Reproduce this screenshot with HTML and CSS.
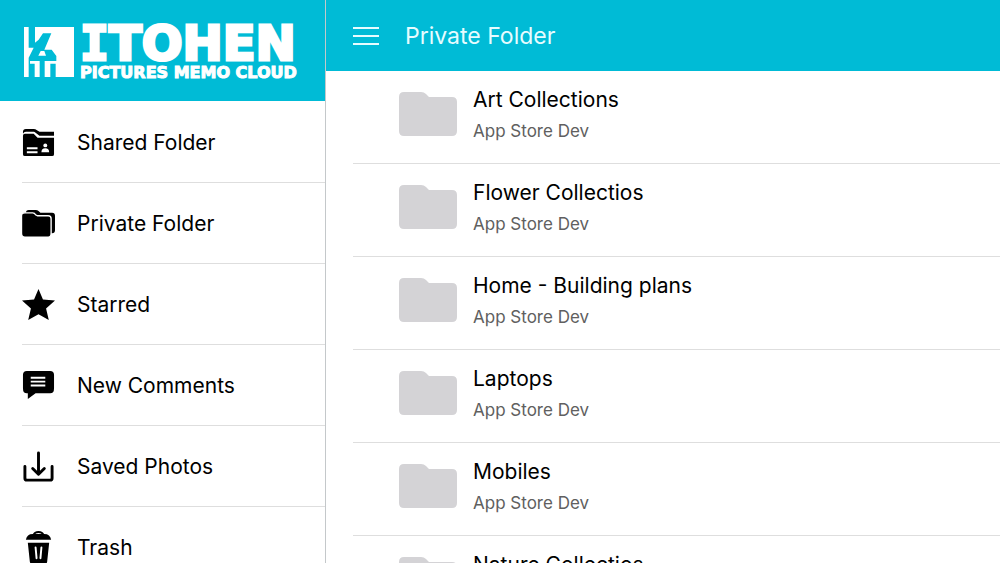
FILE: index.html
```html
<!DOCTYPE html>
<html lang="en">
<head>
  <meta charset="UTF-8">
  <meta name="viewport" content="width=device-width, initial-scale=1">
  <title>Private Folder</title>
  <link rel="stylesheet" href="styles.css">
</head>
<body>

<!-- shared folder shape for the list -->
<svg width="0" height="0" class="defs">
  <symbol id="folder" viewBox="0 0 58 45">
    <path d="M5 1H22Q25 1 27 3L30 6H53Q58 6 58 11V40Q58 45 53 45H5Q0 45 0 40V6Q0 1 5 1Z"/>
  </symbol>
</svg>

<div class="app">
  <aside class="sidebar">
    <div class="brand">
      <svg class="brand-mark" viewBox="0 0 150 150">
        <path fill="#fff" d="M0 0H150V150H0Z"/>
        <path fill="#00bbd6" d="M14 0H33V47L44 38L57 19H82L61 68H83L97 87V102H95V150H79V110H95V102H62V150H47V102H18V110H32V150H14V92L29 62H14Z"/>
        <path fill="#fff" d="M43 86L50 72H61L66 86Z"/>
      </svg>
      <div class="brand-text">
        <span class="brand-name"><span class="slab">I</span>TOHEN</span>
        <span class="brand-sub">PICTURES MEMO CLOUD</span>
      </div>
    </div>
    <nav class="menu">
      <a href="#shared">
        <svg viewBox="0 0 34 34">
          <path d="M1 8V6Q1 3 4 3H12Q14 3 15 4L18 6H33V10H18L14 7Q13 6 12 6H4Q2 6 1 8Z"/>
          <path d="M1 10Q1 8 3 8H12L16 12H33V29Q33 31 31 31H3Q1 31 1 29Z"/>
          <path fill="#fff" d="M5 22H16V24H5ZM5 26H16V28H5ZM20 27Q20 23 24 23Q28 23 28 27Z"/>
          <circle fill="#fff" cx="24" cy="20" r="2"/>
        </svg>
        <span>Shared Folder</span>
      </a>
      <a href="#private">
        <svg viewBox="0 0 34 34">
          <path d="M4 6Q4 3 7 3H14Q16 3 17 4L19 6H31Q34 6 34 9V24Q34 27 31 27H4Z"/>
          <path stroke="#fff" stroke-width="1.4" d="M-.5 9Q-.5 6 3 6H11Q13 6 14 8L16 9H27Q30 9 30 12V27Q30 31 27 31H3Q-.5 31-.5 27Z"/>
        </svg>
        <span>Private Folder</span>
      </a>
      <a href="#starred">
        <svg viewBox="0 0 34 34">
          <path d="M17 1L21.6 11.8L34 13L24.8 21L27.6 33L17 27L6.4 33L9.2 21L0 13L12.4 11.8Z"/>
        </svg>
        <span>Starred</span>
      </a>
      <a href="#comments">
        <svg viewBox="0 0 34 34">
          <path d="M5 2H29Q33 2 33 6V20Q33 25 29 25H14L6 31V25H5Q1 25 1 20V6Q1 2 5 2Z"/>
          <path stroke="#fff" stroke-width="2" d="M9 9H24M9 13H24M9 17H24"/>
        </svg>
        <span>New Comments</span>
      </a>
      <a href="#saved">
        <svg viewBox="0 0 34 34" class="line">
          <path d="M3 17V29Q3 31 5 31H29Q31 31 31 29V17M17 3V25M11 19L17 25L23 19"/>
        </svg>
        <span>Saved Photos</span>
      </a>
      <a href="#trash">
        <svg viewBox="0 0 34 34">
          <path fill="none" stroke="#000" stroke-width="2" d="M12 4Q13 1 17 1Q21 1 22 4"/>
          <path d="M4 9Q5 3 11 3H23Q29 3 30 9Z"/>
          <path d="M6 12H28L26 31Q26 34 23 34H11Q8 34 8 31Z"/>
          <path stroke="#fff" stroke-width="2" stroke-linecap="round" d="M14 17L15 28M20 17L19 28"/>
        </svg>
        <span>Trash</span>
      </a>
    </nav>
  </aside>

  <main class="content">
    <header class="topbar">
      <button type="button" class="menu-btn" aria-label="Menu">
        <svg viewBox="0 0 26 20"><path d="M0 2H26M0 10H26M0 18H26"/></svg>
      </button>
      <h1>Private Folder</h1>
    </header>
    <ul class="folders">
      <li>
        <svg><use href="#folder"/></svg>
        <div><h2>Art Collections</h2><p>App Store Dev</p></div>
      </li>
      <li>
        <svg><use href="#folder"/></svg>
        <div><h2>Flower Collectios</h2><p>App Store Dev</p></div>
      </li>
      <li>
        <svg><use href="#folder"/></svg>
        <div><h2>Home - Building plans</h2><p>App Store Dev</p></div>
      </li>
      <li>
        <svg><use href="#folder"/></svg>
        <div><h2>Laptops</h2><p>App Store Dev</p></div>
      </li>
      <li>
        <svg><use href="#folder"/></svg>
        <div><h2>Mobiles</h2><p>App Store Dev</p></div>
      </li>
      <li>
        <svg><use href="#folder"/></svg>
        <div><h2>Nature Collectios</h2><p>App Store Dev</p></div>
      </li>
    </ul>
  </main>
</div>

</body>
</html>
```
FILE: styles.css
```css
* {
  box-sizing: border-box;
}
body {
  margin: 0;
  font-family: Inter, "Liberation Sans", sans-serif;
  background-color: #fff;
  color: #000;
}
h1, h2, p, ul {
  margin: 0;
  padding: 0;
  font-weight: 400;
}
.defs {
  position: absolute;
}
.app {
  display: flex;
  height: 100vh;
  overflow: hidden;
}

/* sidebar */
.sidebar {
  flex: 0 0 326px;
  border-right: 1px solid #c4c8ca;
  overflow-y: auto;
  scrollbar-width: none;
}
.brand {
  display: flex;
  align-items: center;
  gap: 6px;
  height: 101px;
  padding: 3px 24px 0;
  background-color: #00bbd6;
  color: #fff;
}
.brand-mark {
  flex: none;
  width: 50px;
  height: 50px;
}
.brand-text {
  display: flex;
  flex-direction: column;
  gap: 4px;
  padding-top: 2px;
  font-family: "DejaVu Sans", sans-serif;
  font-weight: 700;
  white-space: nowrap;
}
.brand-name {
  font-size: 48px;
  line-height: 36px;
  -webkit-text-stroke: 3px #fff;
}
.slab {
  font-family: "DejaVu Sans Mono", monospace;
}
.brand-sub {
  font-size: 16px;
  line-height: 16px;
  -webkit-text-stroke: 1px #fff;
}
.menu {
  padding-top: 1px;
}
.menu a {
  display: flex;
  align-items: center;
  gap: 22px;
  height: 81px;
  margin-left: 22px;
  border-bottom: 1px solid #dedede;
  color: #000;
  font-size: 21px;
  text-decoration: none;
}
.menu svg {
  width: 33px;
  height: 33px;
}
.menu .line {
  fill: none;
  stroke: #000;
  stroke-width: 3;
  stroke-linecap: round;
  stroke-linejoin: round;
}

/* folder list */
.content {
  flex: 1;
  min-width: 0;
  display: flex;
  flex-direction: column;
}
.topbar {
  flex: none;
  display: flex;
  align-items: center;
  gap: 26px;
  height: 71px;
  padding-left: 27px;
  background-color: #00bbd6;
  color: #e6fcff;
}
.topbar h1 {
  font-size: 23px;
}
.menu-btn {
  padding: 0;
  border: 0;
  background: none;
  cursor: pointer;
}
.menu-btn svg {
  display: block;
  width: 26px;
  height: 20px;
  stroke: #e6fcff;
  stroke-width: 2;
}
.folders {
  flex: 1;
  list-style: none;
  overflow-y: auto;
  scrollbar-width: none;
}
.folders li {
  display: flex;
  gap: 16px;
  height: 93px;
  margin-left: 27px;
  padding: 14px 0 0 46px;
  border-bottom: 1px solid #dedede;
}
.folders svg {
  flex: none;
  width: 58px;
  height: 45px;
  margin-top: 6px;
  fill: #d4d3d6;
}
.folders h2 {
  font-size: 21px;
  line-height: 30px;
}
.folders p {
  color: #606060;
  font-size: 17px;
  line-height: 32px;
}
```
